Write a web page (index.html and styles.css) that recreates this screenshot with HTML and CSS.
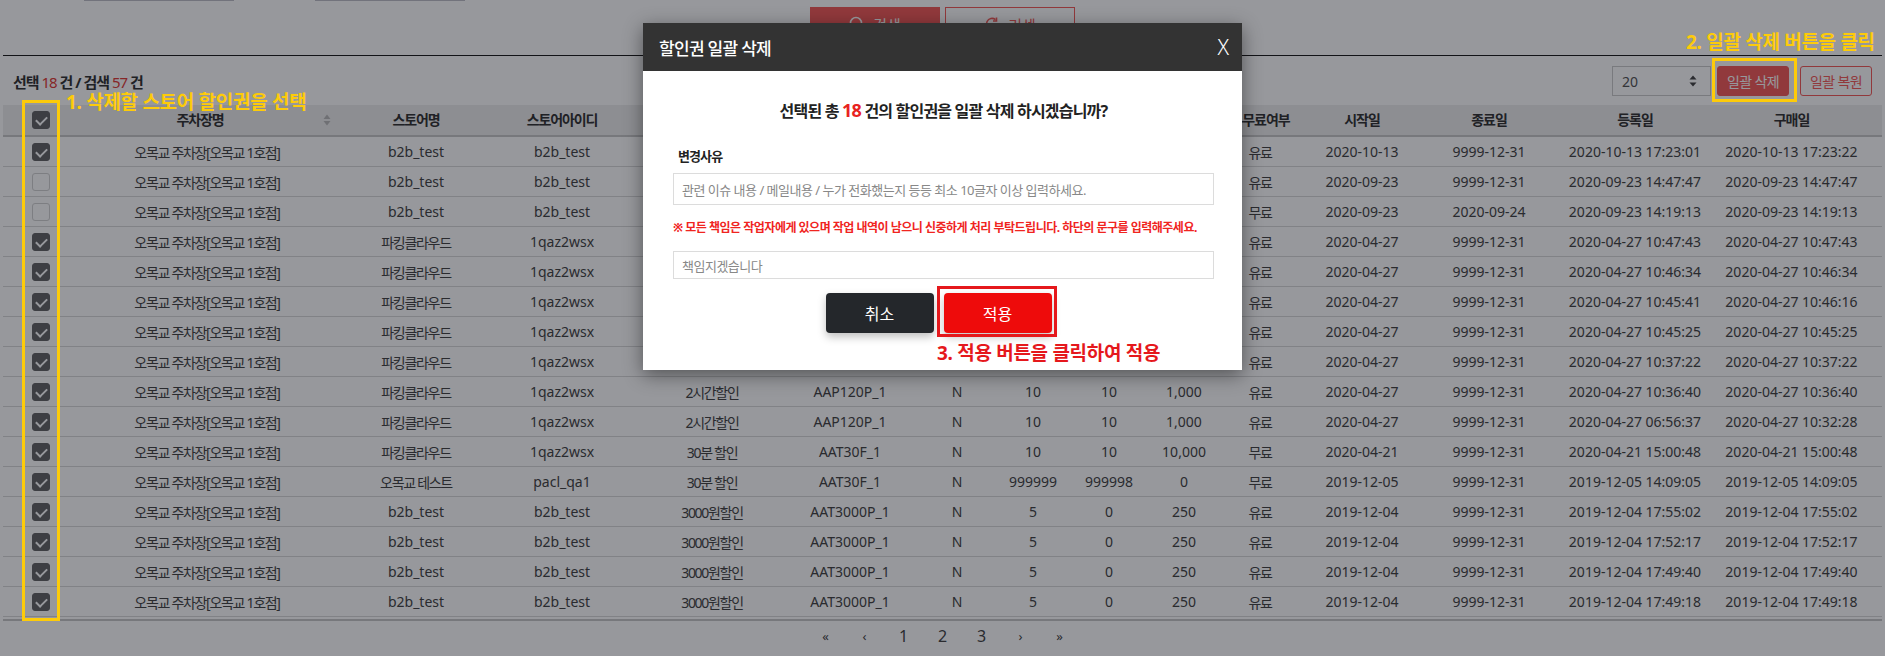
FILE: index.html
```html
<!DOCTYPE html>
<html lang="ko">
<head>
<meta charset="utf-8">
<title>할인권 일괄 삭제</title>
<link rel="stylesheet" href="styles.css">
</head>
<body>
<div class="page">
  <div class="search-inputs"><span class="field"></span><span class="field"></span></div>
  <div class="search-actions">
    <button class="btn-search"><svg width="16" height="16" viewBox="0 0 16 16"><circle cx="7" cy="7" r="5.5" fill="none" stroke="#fff" stroke-width="1.6"/><line x1="11" y1="11" x2="15" y2="15" stroke="#fff" stroke-width="1.6"/></svg>검색</button>
    <button class="btn-reset"><svg width="16" height="16" viewBox="0 0 16 16"><path d="M13.5 8a5.5 5.5 0 1 1-2-4.3" fill="none" stroke="#f55c5a" stroke-width="1.6"/><path d="M12.5 1.5v3.5h-3.5" fill="none" stroke="#f55c5a" stroke-width="1.6"/></svg>리셋</button>
  </div>
  <div class="divider"></div>
  <div class="toolbar">
    <div class="count">선택 <em>18</em> 건 / 검색 <em>57</em> 건</div>
    <div class="tools">
      <div class="select"><span>20</span><svg width="8" height="12" viewBox="0 0 8 12"><path d="M4 0.5L7.5 4.5H0.5Z M4 11.5L7.5 7.5H0.5Z" fill="#444"/></svg></div>
      <button class="btn-del">일괄 삭제</button>
      <button class="btn-restore">일괄 복원</button>
    </div>
  </div>
  <div class="table">
    <div class="row head">
      <div class="c"><span class="chk on"></span></div>
      <div class="c sort">주차장명<svg class="sort-ic" width="8" height="12" viewBox="0 0 8 12"><path d="M4 0.5L7.5 5H0.5Z M4 11.5L7.5 7H0.5Z" fill="#bbb"/></svg></div>
      <div class="c">스토어명</div>
      <div class="c">스토어아이디</div>
      <div class="c"></div><div class="c"></div><div class="c"></div><div class="c"></div><div class="c"></div><div class="c"></div>
      <div class="c">유무료여부</div>
      <div class="c">시작일</div>
      <div class="c">종료일</div>
      <div class="c">등록일</div>
      <div class="c">구매일</div>
    </div>
    <div class="tbody">
      <div class="row"><div class="c"><span class="chk on"></span></div><div class="c k">오목교 주차장[오목교 1호점]</div><div class="c">b2b_test</div><div class="c">b2b_test</div><div class="c"></div><div class="c"></div><div class="c"></div><div class="c"></div><div class="c"></div><div class="c"></div><div class="c k">유료</div><div class="c">2020-10-13</div><div class="c">9999-12-31</div><div class="c">2020-10-13 17:23:01</div><div class="c">2020-10-13 17:23:22</div></div>
      <div class="row"><div class="c"><span class="chk"></span></div><div class="c k">오목교 주차장[오목교 1호점]</div><div class="c">b2b_test</div><div class="c">b2b_test</div><div class="c"></div><div class="c"></div><div class="c"></div><div class="c"></div><div class="c"></div><div class="c"></div><div class="c k">유료</div><div class="c">2020-09-23</div><div class="c">9999-12-31</div><div class="c">2020-09-23 14:47:47</div><div class="c">2020-09-23 14:47:47</div></div>
      <div class="row"><div class="c"><span class="chk"></span></div><div class="c k">오목교 주차장[오목교 1호점]</div><div class="c">b2b_test</div><div class="c">b2b_test</div><div class="c"></div><div class="c"></div><div class="c"></div><div class="c"></div><div class="c"></div><div class="c"></div><div class="c k">무료</div><div class="c">2020-09-23</div><div class="c">2020-09-24</div><div class="c">2020-09-23 14:19:13</div><div class="c">2020-09-23 14:19:13</div></div>
      <div class="row"><div class="c"><span class="chk on"></span></div><div class="c k">오목교 주차장[오목교 1호점]</div><div class="c k">파킹클라우드</div><div class="c">1qaz2wsx</div><div class="c"></div><div class="c"></div><div class="c"></div><div class="c"></div><div class="c"></div><div class="c"></div><div class="c k">유료</div><div class="c">2020-04-27</div><div class="c">9999-12-31</div><div class="c">2020-04-27 10:47:43</div><div class="c">2020-04-27 10:47:43</div></div>
      <div class="row"><div class="c"><span class="chk on"></span></div><div class="c k">오목교 주차장[오목교 1호점]</div><div class="c k">파킹클라우드</div><div class="c">1qaz2wsx</div><div class="c"></div><div class="c"></div><div class="c"></div><div class="c"></div><div class="c"></div><div class="c"></div><div class="c k">유료</div><div class="c">2020-04-27</div><div class="c">9999-12-31</div><div class="c">2020-04-27 10:46:34</div><div class="c">2020-04-27 10:46:34</div></div>
      <div class="row"><div class="c"><span class="chk on"></span></div><div class="c k">오목교 주차장[오목교 1호점]</div><div class="c k">파킹클라우드</div><div class="c">1qaz2wsx</div><div class="c"></div><div class="c"></div><div class="c"></div><div class="c"></div><div class="c"></div><div class="c"></div><div class="c k">유료</div><div class="c">2020-04-27</div><div class="c">9999-12-31</div><div class="c">2020-04-27 10:45:41</div><div class="c">2020-04-27 10:46:16</div></div>
      <div class="row"><div class="c"><span class="chk on"></span></div><div class="c k">오목교 주차장[오목교 1호점]</div><div class="c k">파킹클라우드</div><div class="c">1qaz2wsx</div><div class="c"></div><div class="c"></div><div class="c"></div><div class="c"></div><div class="c"></div><div class="c"></div><div class="c k">유료</div><div class="c">2020-04-27</div><div class="c">9999-12-31</div><div class="c">2020-04-27 10:45:25</div><div class="c">2020-04-27 10:45:25</div></div>
      <div class="row"><div class="c"><span class="chk on"></span></div><div class="c k">오목교 주차장[오목교 1호점]</div><div class="c k">파킹클라우드</div><div class="c">1qaz2wsx</div><div class="c"></div><div class="c"></div><div class="c"></div><div class="c"></div><div class="c"></div><div class="c"></div><div class="c k">유료</div><div class="c">2020-04-27</div><div class="c">9999-12-31</div><div class="c">2020-04-27 10:37:22</div><div class="c">2020-04-27 10:37:22</div></div>
      <div class="row"><div class="c"><span class="chk on"></span></div><div class="c k">오목교 주차장[오목교 1호점]</div><div class="c k">파킹클라우드</div><div class="c">1qaz2wsx</div><div class="c k">2시간할인</div><div class="c">AAP120P_1</div><div class="c">N</div><div class="c">10</div><div class="c">10</div><div class="c">1,000</div><div class="c k">유료</div><div class="c">2020-04-27</div><div class="c">9999-12-31</div><div class="c">2020-04-27 10:36:40</div><div class="c">2020-04-27 10:36:40</div></div>
      <div class="row"><div class="c"><span class="chk on"></span></div><div class="c k">오목교 주차장[오목교 1호점]</div><div class="c k">파킹클라우드</div><div class="c">1qaz2wsx</div><div class="c k">2시간할인</div><div class="c">AAP120P_1</div><div class="c">N</div><div class="c">10</div><div class="c">10</div><div class="c">1,000</div><div class="c k">유료</div><div class="c">2020-04-27</div><div class="c">9999-12-31</div><div class="c">2020-04-27 06:56:37</div><div class="c">2020-04-27 10:32:28</div></div>
      <div class="row"><div class="c"><span class="chk on"></span></div><div class="c k">오목교 주차장[오목교 1호점]</div><div class="c k">파킹클라우드</div><div class="c">1qaz2wsx</div><div class="c k">30분 할인</div><div class="c">AAT30F_1</div><div class="c">N</div><div class="c">10</div><div class="c">10</div><div class="c">10,000</div><div class="c k">무료</div><div class="c">2020-04-21</div><div class="c">9999-12-31</div><div class="c">2020-04-21 15:00:48</div><div class="c">2020-04-21 15:00:48</div></div>
      <div class="row"><div class="c"><span class="chk on"></span></div><div class="c k">오목교 주차장[오목교 1호점]</div><div class="c k">오목교 테스트</div><div class="c">pacl_qa1</div><div class="c k">30분 할인</div><div class="c">AAT30F_1</div><div class="c">N</div><div class="c">999999</div><div class="c">999998</div><div class="c">0</div><div class="c k">무료</div><div class="c">2019-12-05</div><div class="c">9999-12-31</div><div class="c">2019-12-05 14:09:05</div><div class="c">2019-12-05 14:09:05</div></div>
      <div class="row"><div class="c"><span class="chk on"></span></div><div class="c k">오목교 주차장[오목교 1호점]</div><div class="c">b2b_test</div><div class="c">b2b_test</div><div class="c k">3000원할인</div><div class="c">AAT3000P_1</div><div class="c">N</div><div class="c">5</div><div class="c">0</div><div class="c">250</div><div class="c k">유료</div><div class="c">2019-12-04</div><div class="c">9999-12-31</div><div class="c">2019-12-04 17:55:02</div><div class="c">2019-12-04 17:55:02</div></div>
      <div class="row"><div class="c"><span class="chk on"></span></div><div class="c k">오목교 주차장[오목교 1호점]</div><div class="c">b2b_test</div><div class="c">b2b_test</div><div class="c k">3000원할인</div><div class="c">AAT3000P_1</div><div class="c">N</div><div class="c">5</div><div class="c">0</div><div class="c">250</div><div class="c k">유료</div><div class="c">2019-12-04</div><div class="c">9999-12-31</div><div class="c">2019-12-04 17:52:17</div><div class="c">2019-12-04 17:52:17</div></div>
      <div class="row"><div class="c"><span class="chk on"></span></div><div class="c k">오목교 주차장[오목교 1호점]</div><div class="c">b2b_test</div><div class="c">b2b_test</div><div class="c k">3000원할인</div><div class="c">AAT3000P_1</div><div class="c">N</div><div class="c">5</div><div class="c">0</div><div class="c">250</div><div class="c k">유료</div><div class="c">2019-12-04</div><div class="c">9999-12-31</div><div class="c">2019-12-04 17:49:40</div><div class="c">2019-12-04 17:49:40</div></div>
      <div class="row"><div class="c"><span class="chk on"></span></div><div class="c k">오목교 주차장[오목교 1호점]</div><div class="c">b2b_test</div><div class="c">b2b_test</div><div class="c k">3000원할인</div><div class="c">AAT3000P_1</div><div class="c">N</div><div class="c">5</div><div class="c">0</div><div class="c">250</div><div class="c k">유료</div><div class="c">2019-12-04</div><div class="c">9999-12-31</div><div class="c">2019-12-04 17:49:18</div><div class="c">2019-12-04 17:49:18</div></div>
      <div class="row"><div class="c"><span class="chk on"></span></div><div class="c"></div><div class="c"></div><div class="c"></div><div class="c"></div><div class="c"></div><div class="c"></div><div class="c"></div><div class="c"></div><div class="c"></div><div class="c"></div><div class="c"></div><div class="c"></div><div class="c"></div><div class="c"></div></div>
    </div>
  </div>
  <div class="pager">
    <span class="pg arrow">«</span><span class="pg arrow">‹</span><span class="pg cur">1</span><span class="pg">2</span><span class="pg">3</span><span class="pg arrow">›</span><span class="pg arrow">»</span>
  </div>
</div>

<div class="overlay"></div>

<div class="note note1">1. 삭제할 스토어 할인권을 선택</div>
<div class="ybox box1"></div>
<div class="note note2">2. 일괄 삭제 버튼을 클릭</div>
<div class="ybox box2"></div>

<div class="modal">
  <div class="modal-head"><span class="modal-title">할인권 일괄 삭제</span><span class="modal-close">X</span></div>
  <div class="modal-body">
    <p class="question">선택된 총 <em>18</em> 건의 할인권을 일괄 삭제 하시겠습니까?</p>
    <p class="label">변경사유</p>
    <div class="input tall">관련 이슈 내용 / 메일내용 / 누가 전화했는지 등등 최소 10글자 이상 입력하세요.</div>
    <p class="warn">※ 모든 책임은 작업자에게 있으며 작업 내역이 남으니 신중하게 처리 부탁드립니다. 하단의 문구를 입력해주세요.</p>
    <div class="input short">책임지겠습니다</div>
    <div class="actions">
      <button class="btn-cancel">취소</button>
      <button class="btn-apply">적용</button>
    </div>
  </div>
</div>
<div class="rbox"></div>
<div class="note note3">3. 적용 버튼을 클릭하여 적용</div>
</body>
</html>
```

FILE: styles.css
```css
* { box-sizing: border-box; }
html, body { margin: 0; padding: 0; overflow: hidden; }
body {
  width: 1885px;
  height: 656px;
  background: #fff;
  font-family: "Noto Sans", "Noto Sans CJK KR", sans-serif;
  color: #444;
  position: relative;
}
button { font-family: inherit; cursor: pointer; }
em { font-style: normal; }
p { margin: 0; }

.page { padding: 0 3px; }

.search-inputs { display: flex; height: 1px; }
.search-inputs .field { width: 150px; margin-left: 81px; border-bottom: 1px solid #bfc0c8; }

.search-actions { display: flex; justify-content: center; gap: 5px; margin-top: 6px; height: 34px; }
.search-actions button {
  width: 130px; height: 34px; display: flex; align-items: center; justify-content: center; gap: 8px;
  font-size: 15px; border-radius: 0;
}
.btn-search { background: #f55c5a; border: 1px solid #f55c5a; color: #fff; }
.btn-reset { background: #fff; border: 1px solid #f55c5a; color: #f55c5a; }

.divider { margin-top: 14px; height: 1px; background: #1a1a1a; }

.toolbar { margin-top: 10px; height: 30px; display: flex; align-items: center; justify-content: space-between; padding: 0 10px; }
.count { font-size: 15px; font-weight: 700; color: #333; letter-spacing: -1px; }
.count em { color: #e23b37; font-weight: 400; }
.tools { display: flex; align-items: center; height: 30px; }
.select {
  width: 99px; height: 30px; border: 1px solid #ccc; display: flex; align-items: center; justify-content: space-between;
  padding: 0 13px 0 9px; font-size: 14px; color: #555;
}
.btn-del, .btn-restore { height: 30px; width: 72px; font-size: 14px; border-radius: 3px; letter-spacing: -0.6px; padding: 0; }
.btn-del { margin-left: 6px; background: #f55c5a; border: 1px solid #f55c5a; color: #fff; }
.btn-restore { margin-left: 11px; background: #fff; border: 1px solid #f55c5a; color: #f55c5a; }

.table { margin-top: 9px; overflow: hidden; }
.row {
  display: grid;
  grid-template-columns: 76px 256px 162px 130px 170px 106px 108px 44px 108px 42px 110px 94px 160px 132px 1fr;
  height: 30px;
  border-bottom: 1px solid #d9d9d9;
}
.row.head { background: #eeeeee; height: 32px; border-bottom: 2px solid #c9c9c9; font-weight: 700; color: #333; }
.row.head .c { font-size: 14px; letter-spacing: -1.1px; line-height: 16px; }
.c { display: flex; align-items: center; justify-content: center; white-space: nowrap; font-size: 14px; }
.c.k { font-size: 14px; letter-spacing: -1.3px; }
.c.sort { position: relative; padding-right: 14px; }
.sort-ic { position: absolute; right: 4px; top: 9px; }
.tbody { height: 484px; overflow: hidden; border-bottom: 2px solid #c9c9c9; }

.chk { width: 18px; height: 18px; border-radius: 3px; border: 1px solid #d2d2d2; background: #fff; display: block; position: relative; }
.chk.on { background: #646467; border-color: #646467; }
.chk.on::after {
  content: ""; position: absolute; left: 5px; top: 2px; width: 5px; height: 9px;
  border: solid #fff; border-width: 0 2px 2px 0; transform: rotate(45deg);
}

.pager { height: 30px; display: flex; justify-content: center; align-items: center; }
.pg { width: 39px; text-align: center; font-size: 16px; color: #444; }
.pg.arrow { font-size: 13px; }

.overlay { position: absolute; inset: 0; background: rgba(7, 10, 19, 0.42); }

.note { position: absolute; font-size: 19px; font-weight: 700; line-height: 18px; white-space: nowrap; letter-spacing: -0.3px; }
.note1 { left: 66px; top: 93px; color: #fdcb0a; }
.note2 { left: 1686px; top: 33px; color: #fdcb0a; }
.note3 { left: 937px; top: 344px; color: #e5181c; }
.ybox { position: absolute; border: 3px solid #fdcb0a; }
.box1 { left: 22px; top: 100px; width: 38px; height: 521px; }
.box2 { left: 1712px; top: 58px; width: 85px; height: 44px; }
.rbox { position: absolute; left: 937px; top: 286px; width: 120px; height: 51px; border: 3px solid #e5181c; }

.modal {
  position: absolute; left: 643px; top: 23px; width: 599px; height: 347px; background: #fff;
  box-shadow: 0 5px 18px rgba(0, 0, 0, 0.45);
}
.modal-head {
  height: 48px; background: #333; color: #fff; display: flex; align-items: center; justify-content: space-between;
  padding: 0 13px 0 16px;
}
.modal-title { font-size: 17px; letter-spacing: -0.7px; font-weight: 500; }
.modal-close { font-size: 21px; font-weight: 300; line-height: 1; }
.modal-body { padding: 28px 28px 0 30px; }
.question { text-align: center; font-size: 16px; line-height: 22px; font-weight: 700; color: #222; letter-spacing: -0.8px; }
.question em { color: #e8231f; font-size: 18px; }
.label { margin-top: 25px; font-size: 13px; line-height: 18px; font-weight: 700; color: #222; padding-left: 5px; letter-spacing: -0.9px; }
.input {
  border: 1px solid #dcdcdc; display: flex; align-items: center; padding-left: 8px;
  font-size: 13px; color: #888; letter-spacing: -0.5px; white-space: nowrap;
}
.input.tall { margin-top: 8px; height: 32px; }
.input.short { margin-top: 15px; height: 28px; }
.warn { margin-top: 15px; font-size: 12px; line-height: 16px; font-weight: 700; color: #f0251f; letter-spacing: -0.5px; white-space: nowrap; }
.actions { margin-top: 14px; display: flex; justify-content: center; gap: 10px; padding-right: 10px; }
.actions button { width: 108px; height: 40px; border: 0; border-radius: 4px; color: #fff; font-size: 16px; box-shadow: 0 4px 8px rgba(0, 0, 0, 0.25); }
.btn-cancel { background: #24272b; }
.btn-apply { background: #ee0b0b; }
```
